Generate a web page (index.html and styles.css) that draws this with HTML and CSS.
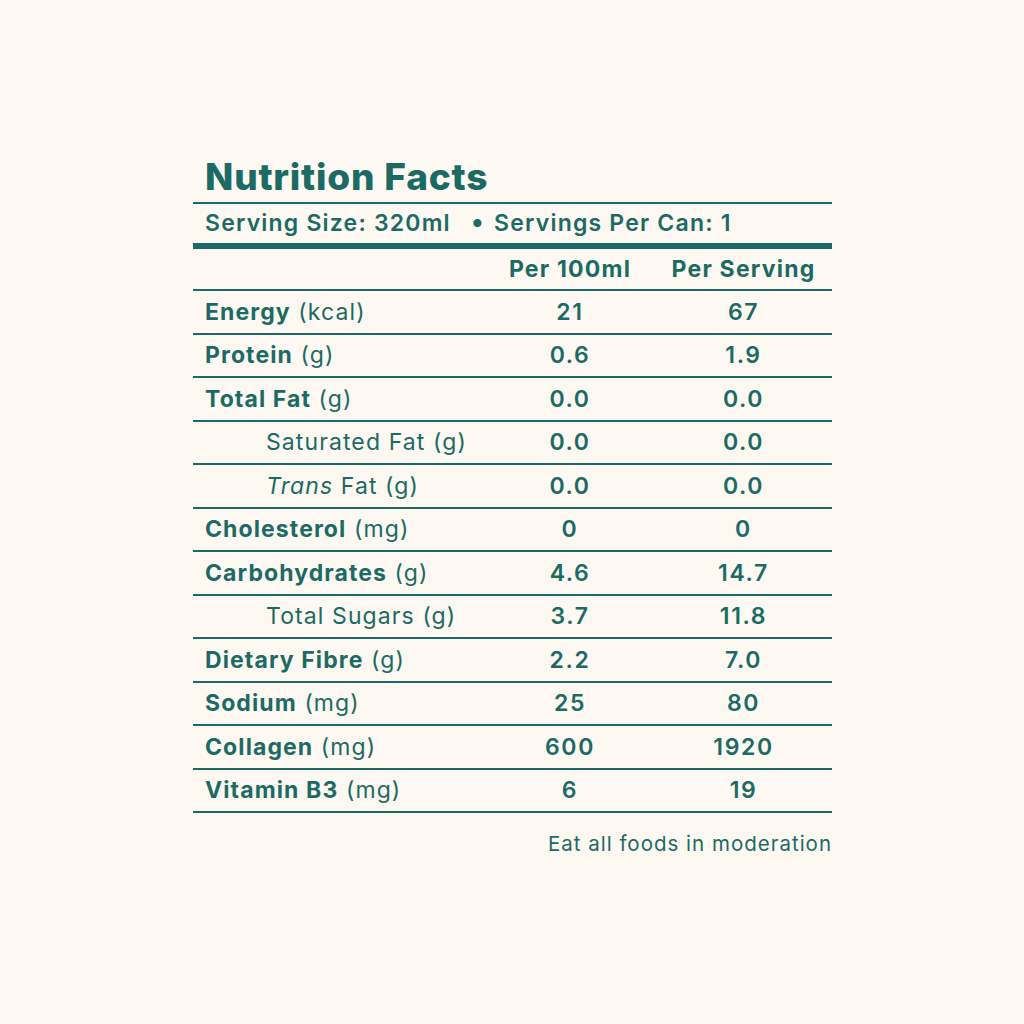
FILE: index.html
```html
<!DOCTYPE html>
<html lang="en">
<head>
<meta charset="utf-8">
<title>Nutrition Facts</title>
<link rel="stylesheet" href="styles.css">
</head>
<body>
<main class="page">
  <section class="label">
    <h1 class="title">Nutrition Facts</h1>
    <div class="serving">Serving Size: 320ml <span class="dot">•</span> Servings Per Can: 1</div>
    <div class="row head">
      <div class="name"></div>
      <div class="val">Per 100ml</div>
      <div class="val">Per Serving</div>
    </div>
    <div class="row"><div class="name"><b>Energy</b> (kcal)</div><div class="val">21</div><div class="val">67</div></div>
    <div class="row"><div class="name"><b>Protein</b> (g)</div><div class="val">0.6</div><div class="val">1.9</div></div>
    <div class="row"><div class="name"><b>Total Fat</b> (g)</div><div class="val">0.0</div><div class="val">0.0</div></div>
    <div class="row"><div class="name sub">Saturated Fat (g)</div><div class="val">0.0</div><div class="val">0.0</div></div>
    <div class="row"><div class="name sub"><i>Trans</i> Fat (g)</div><div class="val">0.0</div><div class="val">0.0</div></div>
    <div class="row"><div class="name"><b>Cholesterol</b> (mg)</div><div class="val">0</div><div class="val">0</div></div>
    <div class="row"><div class="name"><b>Carbohydrates</b> (g)</div><div class="val">4.6</div><div class="val">14.7</div></div>
    <div class="row"><div class="name sub">Total Sugars (g)</div><div class="val">3.7</div><div class="val">11.8</div></div>
    <div class="row"><div class="name"><b>Dietary Fibre</b> (g)</div><div class="val">2.2</div><div class="val">7.0</div></div>
    <div class="row"><div class="name"><b>Sodium</b> (mg)</div><div class="val">25</div><div class="val">80</div></div>
    <div class="row"><div class="name"><b>Collagen</b> (mg)</div><div class="val">600</div><div class="val">1920</div></div>
    <div class="row"><div class="name"><b>Vitamin B3</b> (mg)</div><div class="val">6</div><div class="val">19</div></div>
    <p class="note">Eat all foods in moderation</p>
  </section>
</main>
</body>
</html>
```

FILE: styles.css
```css
html, body {
  margin: 0;
  padding: 0;
  background: #fdf8f2;
}
body {
  width: 1024px;
  height: 1024px;
  font-family: "Inter", "Liberation Sans", sans-serif;
  color: #1b6b64;
}
.page {
  padding-top: 152px;
  padding-left: 193px;
}
.label {
  width: 639px;
}
.title {
  margin: 0;
  padding: 0 12px;
  font-size: 37px;
  font-weight: 800;
  letter-spacing: 0.8px;
  line-height: 50px;
  border-bottom: 2px solid #1b6b64;
}
.serving {
  padding: 0 12px;
  font-size: 23px;
  font-weight: 600;
  letter-spacing: 1.2px;
  line-height: 39px;
  border-bottom: 6px solid #1b6b64;
}
.dot {
  display: inline-block;
  margin: 0 2px 0 13px;
  font-size: 26px;
  line-height: 20px;
  vertical-align: 0;
}
.row {
  display: grid;
  grid-template-columns: 292px 170px 177px;
  align-items: center;
  height: 41.5px;
  border-bottom: 2px solid #1b6b64;
  font-size: 23px;
  letter-spacing: 1.1px;
}
.row.head {
  height: 40px;
}
.name {
  padding-left: 12px;
  font-weight: 400;
  white-space: nowrap;
}
.name b {
  font-weight: 700;
}
.name.sub {
  padding-left: 73px;
}
.val {
  text-align: center;
  font-weight: 600;
  letter-spacing: 1.6px;
}
.head .val {
  font-weight: 700;
  letter-spacing: 1.2px;
}
.note {
  margin: 17px 0 0;
  text-align: right;
  font-size: 20.5px;
  letter-spacing: 1px;
  line-height: 28px;
}
```
